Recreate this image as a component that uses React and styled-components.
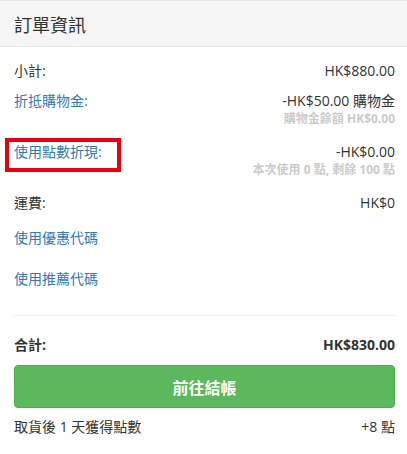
import React from "react";
import styled, { createGlobalStyle } from "styled-components";

const GlobalStyle = createGlobalStyle`
  html, body {
    margin: 0;
    padding: 0;
    background: #fff;
  }
  body {
    font-family: "Open Sans", "Noto Sans CJK TC", sans-serif;
    color: #333;
  }
`;

const Panel = styled.div`
  width: 407px;
  height: 454px;
  overflow: hidden;
  background: #fff;
`;

const Header = styled.div`
  height: 45px;
  display: flex;
  align-items: center;
  padding: 0 14px;
  background: #f5f5f5;
  border-top: 1px solid #e7e7e7;
  border-bottom: 1px solid #e7e7e7;
  font-size: 18px;
  color: #333;
`;

const Body = styled.div`
  padding: 14px 12px 0 14px;
  font-size: 14px;
`;

const Block = styled.div`
  margin-bottom: ${(p) => p.$gap || 10}px;
`;

const Row = styled.div`
  display: flex;
  justify-content: space-between;
  align-items: center;
  height: 20px;
  line-height: 20px;
  font-weight: ${(p) => (p.$bold ? 700 : 400)};
`;

const Label = styled.span`
  position: relative;
  color: ${(p) => (p.$link ? "#337ab7" : "#333")};
`;

// red annotation frame drawn over the label
const Marked = styled(Label)`
  &::after {
    content: "";
    position: absolute;
    left: -9px;
    top: -4px;
    width: 108px;
    height: 26px;
    border: 4px solid #e60012;
  }
`;

const Amount = styled.span`
  color: #333;
`;

const Note = styled.div`
  text-align: right;
  font-size: 12px;
  line-height: 16px;
  font-weight: 700;
  color: #cbcbcb;
`;

const LinkRow = styled.div`
  height: 20px;
  line-height: 20px;
  color: #337ab7;
  margin-bottom: ${(p) => p.$gap || 0}px;
`;

const Divider = styled.hr`
  border: 0;
  border-top: 1px solid #eee;
  margin: 0 0 19px;
`;

const CheckoutButton = styled.button`
  display: block;
  width: 100%;
  height: 43px;
  margin: 10px 0 9px;
  background: #5cb85c;
  border: 1px solid #4cae4c;
  border-radius: 4px;
  color: #fff;
  font-family: inherit;
  font-size: 16px;
  font-weight: 700;
  cursor: pointer;
`;

export default function App() {
  return (
    <Panel>
      <GlobalStyle />
      <Header>訂單資訊</Header>
      <Body>
        <Block>
          <Row>
            <Label>小計:</Label>
            <Amount>HK$880.00</Amount>
          </Row>
        </Block>
        <Block $gap={15}>
          <Row>
            <Label $link>折抵購物金:</Label>
            <Amount>-HK$50.00 購物金</Amount>
          </Row>
          <Note>購物金餘額 HK$0.00</Note>
        </Block>
        <Block $gap={15}>
          <Row>
            <Marked $link>使用點數折現:</Marked>
            <Amount>-HK$0.00</Amount>
          </Row>
          <Note>本次使用 0 點, 剩餘 100 點</Note>
        </Block>
        <Block $gap={15}>
          <Row>
            <Label>運費:</Label>
            <Amount>HK$0</Amount>
          </Row>
        </Block>
        <LinkRow $gap={21}>使用優惠代碼</LinkRow>
        <LinkRow $gap={26}>使用推薦代碼</LinkRow>
        <Divider />
        <Row $bold>
          <Label>合計:</Label>
          <Amount>HK$830.00</Amount>
        </Row>
        <CheckoutButton>前往結帳</CheckoutButton>
        <Row>
          <Label>取貨後 1 天獲得點數</Label>
          <Amount>+8 點</Amount>
        </Row>
      </Body>
    </Panel>
  );
}
